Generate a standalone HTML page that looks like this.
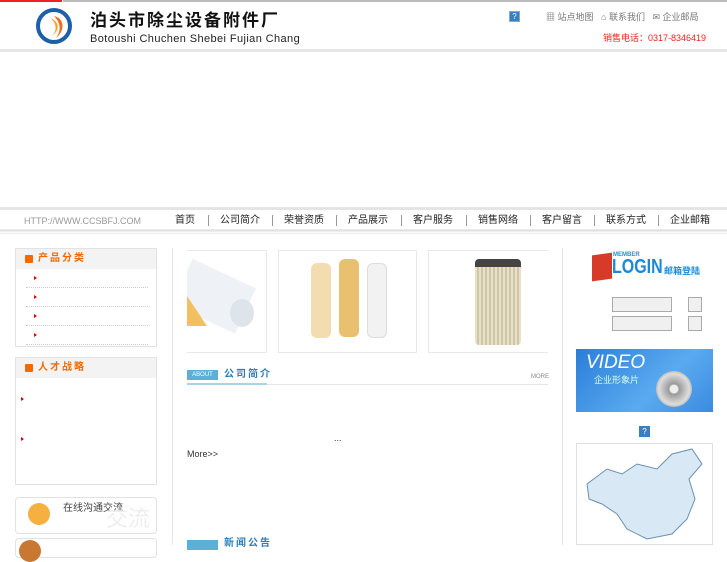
<!DOCTYPE html><html><head><meta charset="utf-8"><style>
*{margin:0;padding:0;box-sizing:border-box}
body{width:727px;height:545px;overflow:hidden;background:#fff;font-family:"Liberation Sans","Noto Sans CJK SC",sans-serif;position:relative}
.a{position:absolute}
.nav span{position:absolute;top:215px;font-size:10px;color:#222;line-height:12px}
.sep{position:absolute;top:215px;width:1px;height:11px;background:#999}
.box{position:absolute;border:1px solid #e2e2e2;background:#fff}
.bh{height:20px;background:#f3f3f3;font-size:10px;font-weight:bold;color:#f06a00;padding:4px 0 0 22px;position:relative;letter-spacing:2px;line-height:12px}
.bh:before{content:"";position:absolute;left:9px;top:6px;width:8px;height:8px;background:#f06a00;border-radius:1px}
.li{height:19px;border-bottom:1px dotted #ccc;margin:0 8px 0 10px;position:relative}
.li:after{content:"";position:absolute;left:8px;top:7px;border-left:3px solid #d00;border-top:2px solid transparent;border-bottom:2px solid transparent}
.ar{position:absolute;border-left:3px solid #d00;border-top:2px solid transparent;border-bottom:2px solid transparent}
.img{position:absolute;border:1px solid #e8e8e8;background:#fff;top:250px;height:103px}
</style></head><body>
<div class="a" style="left:0;top:0;width:62px;height:2px;background:#e22"></div>
<div class="a" style="left:63px;top:0;width:664px;height:2px;background:#bbb"></div>
<svg class="a" style="left:36px;top:8px" width="38" height="36" viewBox="0 0 38 36"><ellipse cx="18" cy="18" rx="16" ry="16" fill="none" stroke="#1d5fa8" stroke-width="4"/><path d="M18 8 C28 10 30 22 20 30 C26 22 24 14 18 8Z" fill="#f07020"/><path d="M14 10 C20 14 22 22 16 28 C24 22 24 14 14 10Z" fill="#f5a030"/></svg>
<div class="a" style="left:90px;top:8px;font-size:17px;line-height:22px;color:#111;font-weight:bold;letter-spacing:2px;font-family:'Noto Sans CJK SC',sans-serif">泊头市除尘设备附件厂</div>
<div class="a" style="left:90px;top:33px;font-size:11px;line-height:13px;color:#222;letter-spacing:.4px">Botoushi Chuchen Shebei Fujian Chang</div>
<div class="a" style="left:509px;top:11px;width:11px;height:11px;background:#3a7fc0;border:1px solid #8ab;color:#fff;font-size:8px;text-align:center;line-height:10px">?</div>
<div class="a" style="left:546px;top:11px;font-size:9px;line-height:12px;color:#777">▦ 站点地图 &nbsp; ⌂ 联系我们 &nbsp; ✉ 企业邮局</div>
<div class="a" style="left:603px;top:32px;font-size:9px;line-height:12px;color:#e22">销售电话：0317-8346419</div>
<div class="a" style="left:0;top:49px;width:727px;height:3px;background:#e6e6e6"></div>
<div class="a" style="left:0;top:207px;width:727px;height:3px;background:#e4e4e4"></div>
<div class="a" style="left:0;top:229px;width:727px;height:5px;background:linear-gradient(#eee,#ddd 40%,#fff 60%,#e8e8e8)"></div>
<div class="a" style="left:24px;top:215px;font-size:9px;line-height:12px;color:#999">HTTP://WWW.CCSBFJ.COM</div>
<div class="nav">
<span style="left:175px">首页</span><div class="sep" style="left:208px"></div>
<span style="left:220px">公司简介</span><div class="sep" style="left:272px"></div>
<span style="left:284px">荣誉资质</span><div class="sep" style="left:336px"></div>
<span style="left:348px">产品展示</span><div class="sep" style="left:401px"></div>
<span style="left:413px">客户服务</span><div class="sep" style="left:466px"></div>
<span style="left:478px">销售网络</span><div class="sep" style="left:530px"></div>
<span style="left:542px">客户留言</span><div class="sep" style="left:594px"></div>
<span style="left:606px">联系方式</span><div class="sep" style="left:658px"></div>
<span style="left:670px">企业邮箱</span></div>
<div class="box" style="left:15px;top:248px;width:142px;height:99px"><div class="bh">产品分类</div><div class="li"></div><div class="li"></div><div class="li"></div><div class="li"></div></div>
<div class="box" style="left:15px;top:357px;width:142px;height:128px"><div class="bh">人才战略</div></div>
<div class="ar" style="left:21px;top:397px"></div><div class="ar" style="left:21px;top:437px"></div>
<div class="box" style="left:15px;top:497px;width:142px;height:37px;border-radius:4px"><div class="a" style="left:12px;top:5px;width:22px;height:22px;border-radius:50%;background:#f5b040"></div><div class="a" style="left:47px;top:5px;font-size:10px;line-height:12px;color:#444">在线沟通交流</div><div class="a" style="left:90px;top:8px;font-size:22px;line-height:26px;color:#eee">交流</div></div>
<div class="box" style="left:15px;top:538px;width:142px;height:20px;border-radius:4px"><div class="a" style="left:3px;top:1px;width:22px;height:22px;border-radius:50%;background:#c87830"></div></div>
<div class="a" style="left:172px;top:248px;width:1px;height:297px;background:#e6e6e6"></div>
<div class="a" style="left:562px;top:248px;width:1px;height:297px;background:#e6e6e6"></div>
<div class="img" style="left:187px;width:80px;border-left:none"><svg width="80" height="100"><rect x="-10" y="22" width="70" height="50" fill="#eef2f6" transform="rotate(25 30 50)"/><ellipse cx="55" cy="62" rx="12" ry="14" fill="#dde4ea"/><path d="M0 45 l20 30 h-20z" fill="#f2c060"/></svg></div>
<div class="img" style="left:278px;width:139px"><div class="a" style="left:32px;top:12px;width:20px;height:75px;background:#f3ddb0;border-radius:6px"></div><div class="a" style="left:60px;top:8px;width:20px;height:78px;background:#e8c070;border-radius:6px"></div><div class="a" style="left:88px;top:12px;width:20px;height:75px;background:#f2f2f2;border:1px solid #ddd;border-radius:6px"></div></div>
<div class="img" style="left:428px;width:120px;border-right:none"><div class="a" style="left:46px;top:8px;width:46px;height:86px;background:repeating-linear-gradient(90deg,#e8e0c8 0 2px,#cfc6a8 2px 4px);border-radius:4px;border-top:8px solid #444"></div></div>
<div class="a" style="left:187px;top:370px;width:31px;height:10px;background:#5ab0d8;color:#fff;font-size:6px;text-align:center;line-height:10px">ABOUT</div>
<div class="a" style="left:224px;top:369px;font-size:10px;line-height:12px;font-weight:bold;color:#2a7fb8;letter-spacing:2px">公司简介</div>
<div class="a" style="left:531px;top:374px;font-size:6px;line-height:7px;color:#888">MORE</div>
<div class="a" style="left:187px;top:384px;width:361px;height:1px;background:#e6e6e6"></div>
<div class="a" style="left:187px;top:383px;width:80px;height:2px;background:#a8d4ea"></div>
<div class="a" style="left:334px;top:433px;font-size:9px;line-height:11px;color:#333">...</div>
<div class="a" style="left:187px;top:449px;font-size:9px;line-height:11px;color:#333">More&gt;&gt;</div>
<div class="a" style="left:187px;top:540px;width:31px;height:10px;background:#5ab0d8"></div>
<div class="a" style="left:224px;top:538px;font-size:10px;line-height:12px;font-weight:bold;color:#2a7fb8;letter-spacing:2px">新闻公告</div>
<div class="a" style="left:592px;top:254px;width:20px;height:26px;background:#d83a2a;transform:skewY(-8deg)"></div>
<div class="a" style="left:613px;top:252px;font-size:6px;line-height:7px;color:#2a8fd0;font-weight:bold">MEMBER</div>
<div class="a" style="left:612px;top:256px;font-size:20px;line-height:22px;color:#1a8ad8;font-weight:bold;transform:scaleX(.8);transform-origin:left">LOGIN</div>
<div class="a" style="left:664px;top:266px;font-size:9px;line-height:11px;color:#1a8ad8;font-weight:bold">邮箱登陆</div>
<div class="a" style="left:612px;top:297px;width:60px;height:15px;background:#f0f0f0;border:1px solid #aaa"></div>
<div class="a" style="left:612px;top:316px;width:60px;height:15px;background:#f0f0f0;border:1px solid #aaa"></div>
<div class="a" style="left:688px;top:297px;width:14px;height:15px;background:#f0f0f0;border:1px solid #aaa"></div>
<div class="a" style="left:688px;top:316px;width:14px;height:15px;background:#f0f0f0;border:1px solid #aaa"></div>
<div class="a" style="left:576px;top:349px;width:137px;height:63px;background:linear-gradient(135deg,#2a7ed8,#5aaaf0 60%,#3a8ae0)"><div class="a" style="left:10px;top:3px;font-size:19px;line-height:22px;font-style:italic;color:#fff">VIDEO</div><div class="a" style="left:18px;top:26px;font-size:9px;line-height:11px;color:#dfe">企业形象片</div><div class="a" style="left:80px;top:22px;width:36px;height:36px;border-radius:50%;background:radial-gradient(#eee 15%,#999 20%,#ddd 60%,#666)"></div></div>
<div class="a" style="left:639px;top:426px;width:11px;height:11px;background:#3a7fc0;color:#fff;font-size:8px;text-align:center;line-height:11px">?</div>
<div class="a" style="left:576px;top:443px;width:137px;height:102px;border:1px solid #e0e0e0"><svg width="135" height="100" viewBox="0 0 135 100"><path d="M10 40 L30 25 L45 30 L60 20 L80 25 L95 10 L115 5 L125 20 L112 35 L118 55 L110 75 L95 90 L70 95 L50 85 L40 70 L25 60 L12 55Z" fill="#d8e8f4" stroke="#6a90b0" stroke-width="1"/></svg></div>
</body></html>
